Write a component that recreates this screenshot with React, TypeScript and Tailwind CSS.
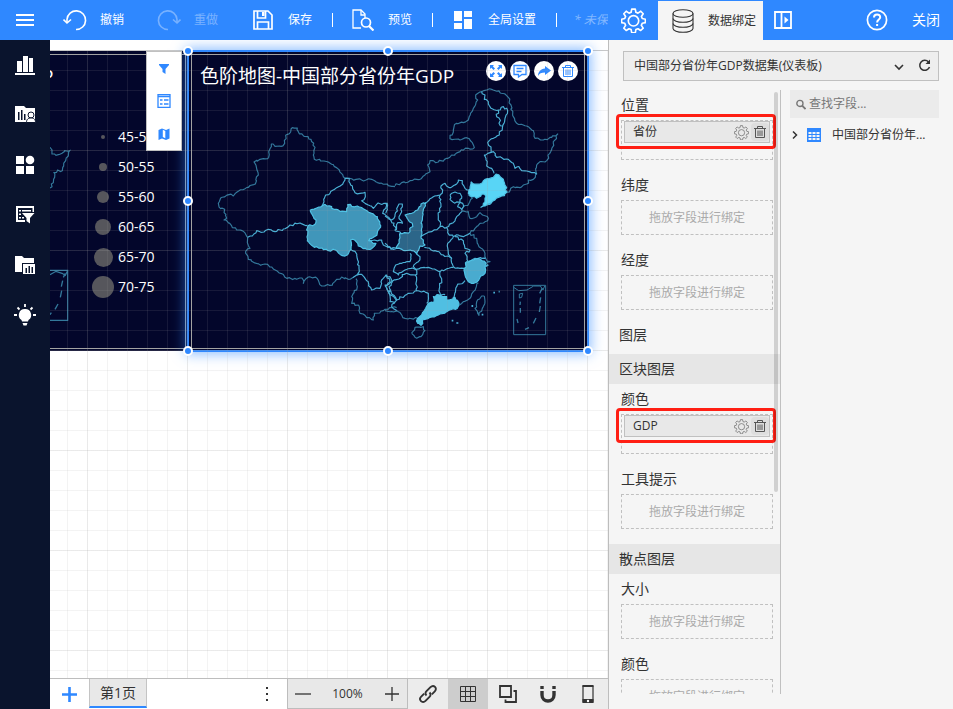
import type { ReactNode } from 'react';
import { clsx } from 'clsx';

const FONT = "font-['Open_Sans','Noto_Sans_CJK_SC',sans-serif]";

/* ---------- toolbar icons ---------- */

const UndoIcon = ({ flip = false }: { flip?: boolean }) => (
    <svg width="24" height="22" viewBox="0 0 24 22" fill="none" stroke="currentColor" strokeWidth="1.6" className={flip ? '-scale-x-100' : ''}>
        <path d="M4 13V10.500A9.300 9.300 0 1 1 13 20.500" />
        <path d="M0.500 10.500L4 14l4-3.500" />
    </svg>
);

const SaveIcon = () => (
    <svg width="20" height="20" viewBox="0 0 20 20" fill="none" stroke="currentColor" strokeWidth="1.7">
        <path d="M1 1h14l4 4v14H1z" />
        <path d="M4.500 1v7h8V1" />
        <path d="M9 2v4h2.500V2z" fill="currentColor" stroke="none" />
        <path d="M4.500 19v-7h11v7" />
    </svg>
);

const PreviewIcon = () => (
    <svg width="22" height="22" viewBox="0 0 22 22" fill="none" stroke="currentColor" strokeWidth="1.3">
        <path d="M9 19H1V1h8l4 4v4" />
        <path d="M9 1v5h4" />
        <circle cx="14" cy="13.500" r="4.500" strokeWidth="1.7" />
        <path d="M17 17l4.500 4.500" strokeWidth="2.200" />
    </svg>
);

const BlocksIcon = () => (
    <svg width="18" height="18" viewBox="0 0 18 18" fill="currentColor">
        <path d="M0 0h8v10H0zM10 0h8v6h-8zM0 12h8v6H0zM10 8h8v10h-8z" />
    </svg>
);

const GearIcon = ({ size, stroke = 1.6 }: { size: number; stroke?: number }) => (
    <svg width={size} height={size} viewBox="0 0 24 24" fill="none" stroke="currentColor" strokeWidth={stroke} strokeLinejoin="round">
        <path d="M10.300 1h3.400l.6 3.100 2 .8 2.700-1.800 2.300 2.400-1.700 2.600.8 2 3 .7v3.200l-3 .6-.9 2.100 1.800 2.600-2.400 2.300-2.600-1.700-2 .8-.6 3.100h-3.400l-.6-3.100-2-.8-2.700 1.700-2.300-2.300 1.700-2.600-.8-2.100L.6 14v-3.200l3-.7.8-2-1.700-2.600L5 3.100l2.700 1.800 2-.8z" />
        <circle cx="12" cy="12.300" r="5" />
    </svg>
);

const DatabaseIcon = () => (
    <svg width="22" height="24" viewBox="0 0 22 24" fill="none" stroke="currentColor" strokeWidth="1.1">
        <ellipse cx="11" cy="4.500" rx="10" ry="3.800" />
        <path d="M1 4.500v15c0 2 4.500 3.800 10 3.800s10-1.800 10-3.800v-15" />
        <path d="M1 9.500c0 2 4.500 3.800 10 3.800s10-1.800 10-3.800M1 14.500c0 2 4.500 3.800 10 3.800s10-1.800 10-3.800" />
    </svg>
);

const PanelIcon = () => (
    <svg width="18" height="18" viewBox="0 0 18 18" fill="none" stroke="currentColor" strokeWidth="1.800">
        <path d="M1 1h16v16H1zM7.500 1v16" />
        <path d="M10.500 5.500v7l4-3.500z" fill="currentColor" stroke="none" />
    </svg>
);

const TrashIcon = ({ size }: { size: number }) => (
    <svg width={size} height={size} viewBox="0 0 14 14" fill="none" stroke="currentColor" strokeWidth="1">
        <path d="M1 3.500h12M4.500 3.500v-2h5v2M2.500 3.500v9h9v-9M5 5.500v5.500M7 5.500v5.500M9 5.500v5.500" />
    </svg>
);

/* ---------- sidebar icons ---------- */

const sideItems: { label: string; icon: ReactNode }[] = [
    {
        label: '图表',
        icon: <path d="M2 6h5v11H2zM8 1h5v16H8zM14 3h4v14h-4zM0 18h20v2H0z" />,
    },
    {
        label: '我的图表',
        icon: (
            <>
                <path d="M0 1h9l2 2h9v14H0z" />
                <path d="M3 7h1.500v8H3zM6 5h1.500v10H6zM9 9h1.500v6H9z" fill="#0a142d" />
                <circle cx="16" cy="10" r="3" stroke="#0a142d" strokeWidth="1" />
                <path d="M11.500 17.500c0-3.500 2-4.500 4.500-4.500s4.500 1 4.500 4.500z" stroke="#0a142d" strokeWidth="1" />
            </>
        ),
    },
    {
        label: '组件',
        icon: (
            <>
                <path d="M1 1h8v8H1zM1 11h8v8H1zM11 11h8v8h-8z" />
                <circle cx="15" cy="5" r="4.300" />
            </>
        ),
    },
    {
        label: '筛选器',
        icon: (
            <>
                <path d="M1 1h18v6h-1.500V3H3v12h7v2H1z" />
                <path d="M4 5h2v1.500H4zM7 5h9v1.500H7zM4 8.500h2V10H4zM4 12h2v1.500H4zM7 12h2v1.500H7z" />
                <path d="M7 8h12.500L15 13v5.500L11.500 16v-3z" />
            </>
        ),
    },
    {
        label: '资源',
        icon: (
            <>
                <path d="M0 1h7l2 2h10v5H7v9H0z" />
                <path d="M8 9h12v10H8z" />
                <path d="M10.500 13H12v5h-1.500zM13.500 11H15v7h-1.500zM16.500 12H18v6h-1.500z" fill="#0a142d" />
            </>
        ),
    },
    {
        label: '智能推荐',
        icon: (
            <>
                <path d="M10 4a6 6 0 0 0-3.500 11l.5 1.500h6l.5-1.500A6 6 0 0 0 10 4zM7.500 18h5l-1 2.500h-3z" />
                <path d="M10-1v3M2.500 2.500l2 2M17.500 2.500l-2 2M-1 10h3M18 10h3" stroke="currentColor" strokeWidth="1.800" />
            </>
        ),
    },
];

/* ---------- map ---------- */

// The offset depends only on the position, so borders shared by two regions stay together.
function jitter(x: number, y: number) {
    const n = Math.sin(x * 12.9898 + y * 78.233) * 43758.5453;
    return (n - Math.floor(n) - 0.5) * 7;
}

// Splits every long segment of an absolute polyline path and shifts the new points a little.
function roughen(d: string) {
    return d.replace(/M[^MZ]+Z?/g, (part) => {
        const nums = part.match(/-?\d+/g)!.map(Number);
        const points: number[][] = [];
        for (let i = 0; i < nums.length; i += 2) points.push([nums[i], nums[i + 1]]);
        if (part.endsWith('Z')) points.push(points[0]);
        const out = [points[0]];
        for (let i = 1; i < points.length; i++) {
            const [ax, ay] = points[i - 1];
            const [bx, by] = points[i];
            const steps = Math.max(1, Math.round(Math.hypot(bx - ax, by - ay) / 7));
            for (let s = 1; s < steps; s++) {
                const x = ax + ((bx - ax) * s) / steps;
                const y = ay + ((by - ay) * s) / steps;
                out.push([x + jitter(x, y), y + jitter(y, x)]);
            }
            out.push([bx, by]);
        }
        return 'M' + out.map((p) => p.map((v) => v.toFixed(1)).join(' ')).join('L');
    });
}

const westLines = [
    'M495 415L478 390 460 374 432 363 403 358 400 345 405 322 393 298 370 287 355 275 352 264 337 263 332 276 317 286 314 310 303 319 274 312 266 335 263 356 240 358 222 366 228 376 235 405 226 432 195 446 166 460 160 468 150 463 122 474 115 490 122 506 134 508 140 535 132 540 154 556 170 570 190 574 203 592 202 608 210 625 197 634 205 658 242 676 255 672 290 692 320 715 350 718 366 714 370 730 378 716 385 711 412 716 425 738 448 736 465 724 485 711 505 718 520 712',
    'M508 415L545 420 575 418 600 430 625 437 645 440',
    'M528 716L532 740 515 770 515 790 535 795 540 820 560 833 580 840 583 820 610 812 635 803 650 803',
];

const westBorders = [
    'M203 592L217 588 230 572 252 576 265 568 285 575 310 567 330 555 360 549 382 556',
    'M495 415L488 433 470 443 450 460 437 465 432 485 426 497',
    'M495 415L508 415 512 435 525 458 540 460 555 457 556 470 545 482 565 495 580 505 590 493 612 490 622 490 617 505 608 520 622 530 632 540 650 570',
    'M512 628L525 634 533 660 537 685 534 705 520 712 545 703 560 722 575 750 600 745 605 720 620 705 630 725 615 735 625 755 630 785 645 788',
    'M566 602L583 600 605 600 610 615 640 628 652 624',
];

const eastLines = [
    'M30 437L50 428 75 422 105 418 120 405 135 395 128 375 135 362 160 366 185 355 200 345 225 335 250 325 268 323 262 308 245 293 225 300 195 296 205 270 215 250 235 248 250 240 265 205 278 180 272 165 290 155 320 148 345 158 365 167 378 195 385 230 395 250 425 258 445 272 450 295 475 300 500 292 518 282 505 310 497 335 485 362 465 365 455 375 455 402 445 418 430 420 425 432 405 443 385 440 375 452 365 456',
    'M250 465L262 475 252 490 235 500 230 515 250 515 255 535 275 530 285 518 310 535 308 542 285 550 270 565 255 580 275 595 282 620 300 640 302 655 315 665 303 672',
    'M298 768L300 785 292 805 282 826 270 805 275 785 290 768Z',
    'M80 880L90 862 115 860 120 872 108 890 90 892Z',
    'M280 728L265 755 255 775 235 785 218 798',
    'M0 812L40 815 60 835 98 835',
];

const eastBorders = [
    'M290 155L300 165 298 178 310 185 318 205 340 210 355 200 368 212 360 235 352 265 343 285 325 295 308 308 318 325 318 337 298 345 303 360 305 378 320 385 327 400',
    'M340 210L335 230 344 238 342 250 352 258',
    'M318 337L325 335 335 352 365 357 385 370 390 385 402 380 410 392 425 393 440 398 455 402',
    'M125 487L145 470 165 465 173 450 168 438 180 430 192 443 215 432 220 420 232 422 240 445 252 450',
    'M195 465L210 456 225 460 230 475 225 487 205 487 195 478ZM225 487L218 500 230 508 236 498 225 487',
    'M165 465L168 500 160 530 165 560 140 575 108 590',
    'M0 528L20 540 30 524 38 500 42 492 52 492 50 515 42 530 52 550 38 548 30 570 48 578',
    'M0 490L8 495 2 520M0 610L18 628 35 624',
    'M230 515L215 530 200 550 185 562 165 560M185 562L188 578 205 590 220 585 235 590 255 580',
    'M205 592L188 610 190 640 200 655 205 680 225 685 238 685',
    'M210 590L235 602 240 625 255 630 240 640 250 665',
    'M250 665L270 655 290 655 302 655',
    'M118 622L150 632 175 645 200 655',
    'M95 642L105 650 100 665 85 680 92 688 130 682 165 695 205 683',
    'M75 640L75 665 50 670 32 675 25 695 40 705 60 690 78 685 92 688',
    'M165 695L170 720 163 745 168 765 180 765',
    'M92 688L95 720 95 752 130 760 130 770 125 790',
    'M92 705L65 700 45 715 20 725 0 740M95 752L70 760 35 780 25 765 5 745',
    'M0 705L15 710 22 725 12 740 15 765 35 780 20 800 35 812',
    'M240 722L215 740 203 775',
];

const provinces = [
    {
        name: '陕西',
        fill: '#2c6689',
        d: 'M125 487L115 510 112 540 110 565 108 590 120 615 105 618 95 642 80 632 60 632 35 625 42 600 45 580 75 575 82 550 70 540 60 525 80 520 98 510 108 492Z',
    },
    {
        name: '辽宁',
        fill: '#58d5f6',
        d: 'M258 425L268 432 285 432 300 418 325 412 333 402 347 412 355 418 360 435 366 456 350 468 330 480 318 490 300 498 288 502 300 485 303 468 290 462 275 475 262 470 250 460 255 447Z',
    },
    {
        name: '浙江',
        fill: '#49abcf',
        d: 'M245 665L265 660 285 657 302 668 302 690 295 705 280 722 265 730 250 725 240 705 238 685Z',
    },
    {
        name: '广东',
        fill: '#50bfe2',
        d: 'M122 805L130 790 145 788 145 770 165 765 185 770 185 780 210 772 222 790 212 808 185 815 160 825 135 832 112 840 108 856 98 850 98 835 110 825Z',
    },
];

const QINGHAI =
    'M390 511L410 504 430 495 455 500 462 508 500 515 503 494 515 499 532 498 550 506 575 520 592 530 602 556 592 578 583 590 570 596 566 602 588 610 575 626 550 626 535 618 524 600 512 600 513 628 503 644 487 647 470 632 430 629 395 616 382 603 380 570 384 557 405 553 408 540 400 530Z';

const ChinaMap = () => (
    <svg viewBox="-591 33 1200 900" className="absolute inset-0 h-full w-full" fill="none" strokeWidth="3.500" strokeLinejoin="round">
        <g transform="translate(-615 0)">
            <g stroke="#33789b">{westLines.map((d) => <path key={d} d={roughen(d)} />)}</g>
            <g stroke="#4ab0d5">{westBorders.map((d) => <path key={d} d={roughen(d)} />)}</g>
            <path fill="#4096ba" stroke="#4fc3e6" d={roughen(QINGHAI)} />
        </g>
        <g stroke="#33789b">{eastLines.map((d) => <path key={d} d={roughen(d)} />)}</g>
        <g stroke="#4ab0d5">{eastBorders.map((d) => <path key={d} d={roughen(d)} />)}</g>
        {provinces.map((p) => (
            <path key={p.name} d={roughen(p.d)} fill={p.fill} stroke="#4fc3e6" />
        ))}
        <path d="M200 842h5M214 849h6M325 758h5M341 755h3M290 824h5M262 795v6M300 680l10-6M306 494l12-4" stroke="#4ab0d5" strokeWidth="5" />
        <g stroke="#33789b" strokeWidth="3">
            <path d="M386 736h96v148h-96z" />
            <path d="M386 742l15 10 25-2 20-12 20 0 8 12 5-12M403 762l10-2-3 12-7 2z" />
            <path d="M472 744l-8 16M467 772l-3 18M466 798l-3 18M453 834l-8 16M432 863l-12 5M399 849l-3-12M406 818l0-14M405 795l1-10" strokeWidth="4" />
        </g>
    </svg>
);

/* ---------- canvas ---------- */

const legend = [
    { label: '45-50', size: 'size-1' },
    { label: '50-55', size: 'size-2' },
    { label: '55-60', size: 'size-3' },
    { label: '60-65', size: 'size-4' },
    { label: '65-70', size: 'size-[19px]' },
    { label: '70-75', size: 'size-[22px]' },
];

const ScatterWidget = () => (
    <section className="absolute top-0 left-0 h-[300px] w-[138px] overflow-hidden bg-[#03062b] text-white">
        <div className="absolute inset-x-0 top-[3px] right-[2px] bottom-[2px] border-y border-r border-[#a3a3a3]" />
        <svg viewBox="150 33 414 900" className="absolute inset-0 h-full w-full" fill="none" stroke="#33789b" strokeWidth="3.500">
            <path d={roughen('M150 322L156 330 156 342 168 346 186 340 194 332 209 332 205 348 197 362 191 378 187 392 173 390 162 398 164 412 160 428 154 432 156 440 150 444')} />
            <path d="M150 691h53v150h-53M150 704l18-10 18 6 10 6 6-12" />
            <path d="M196 700l-6 12M188 722l-4 18M185 752l-4 20M174 792l-9 16M154 818l-4 6" strokeWidth="4" />
        </svg>
        <p className="-ml-2 pt-[11px] text-[19px] leading-7">P</p>
        <ul className="pt-[32px] pl-[42px] text-sm leading-[30px]">
            {legend.map((item) => (
                <li key={item.label} className="flex items-center gap-[4px]">
                    <span className="flex w-[22px] justify-center">
                        <i className={clsx('rounded-full bg-[#56565c]', item.size)} />
                    </span>
                    {item.label}
                </li>
            ))}
        </ul>
    </section>
);

const handles = [
    '-top-[5px] -left-[5px]',
    '-top-[5px] left-[195px]',
    '-top-[5px] -right-[5px]',
    'top-[145px] -right-[5px]',
    '-right-[5px] -bottom-[5px]',
    '-bottom-[5px] left-[195px]',
    '-bottom-[5px] -left-[5px]',
    'top-[145px] -left-[5px]',
];

const actions: { label: string; icon: ReactNode }[] = [
    {
        label: '最大化',
        icon: <path d="M1 5V1h4L3.800 2.300 6 4.500 4.500 6 2.300 3.800zM13 5V1H9l1.200 1.300L8 4.500 9.500 6l2.200-2.200zM1 9v4h4l-1.200-1.300L6 9.500 4.500 8l-2.200 2.200zM13 9v4H9l1.200-1.300L8 9.500 9.500 8l2.200 2.200z" fill="currentColor" />,
    },
    {
        label: '备注',
        icon: <path d="M1 1.500h12v9H9L5.500 13v-2.500H1zM3.500 4.500h7M3.500 7.500h5" stroke="currentColor" strokeWidth="1.300" />,
    },
    {
        label: '转发',
        icon: <path d="M8 2l6 4.500L8 11V8.500C4.500 8.500 2 9.500 1 12c0-4 2.500-7 7-7.500z" fill="currentColor" />,
    },
    { label: '删除', icon: <TrashIcon size={14} /> },
];

const MapWidget = () => (
    <section className="absolute top-0 left-[138px] h-[300px] w-[400px] bg-[#03062b] text-white outline-2 -outline-offset-1 outline-[#2f88ff] shadow-[0_0_12px_3px_rgba(47,136,255,0.55)]">
        <div className="absolute inset-x-[3px] top-[3px] bottom-[2px] border border-[#a3a3a3]" />
        <ChinaMap />
        <header className="relative flex items-start justify-between pt-[10px] pr-[10px] pl-[12px]">
            <h1 className="pt-px text-[19px] leading-7">色阶地图-中国部分省份年GDP</h1>
            <div className="flex gap-1 text-[#2f88ff]">
                {actions.map((a) => (
                    <button key={a.label} aria-label={a.label} className="flex size-5 items-center justify-center rounded-full bg-white">
                        <svg width="14" height="14" viewBox="0 0 14 14" fill="none">{a.icon}</svg>
                    </button>
                ))}
            </div>
        </header>
    </section>
);

const QuickMenu = () => (
    <div className="absolute top-0 left-[96px] flex w-9 flex-col border border-[#c0c0c0] bg-white text-[#2f88ff]">
        <button aria-label="筛选" className="flex h-[33px] items-center justify-center">
            <svg width="14" height="14" viewBox="0 0 14 14" fill="currentColor">
                <path d="M2 2h10v1L8.500 7v5L5.500 10V7L2 3z" />
            </svg>
        </button>
        <button aria-label="图例" className="flex h-[32px] items-center justify-center">
            <svg width="14" height="14" viewBox="0 0 14 14" fill="none" stroke="currentColor">
                <path d="M1 .5h12v13H1zM1 2.500h12" strokeWidth="1.300" />
                <path d="M3 6h2.500M7 6h4.500M3 10h2.500M7 10h4.500" strokeWidth="1.500" />
            </svg>
        </button>
        <button aria-label="地图" className="flex h-[33px] items-center justify-center">
            <svg width="14" height="14" viewBox="0 0 14 14">
                <path d="M1.500 3L5 1.500l4 1.500 3.500-1.500v10L9 13l-4-1.500L1.500 13z" fill="currentColor" />
                <path d="M5.800 2.800L8.300 4v7.200L5.800 10z" fill="#fff" />
            </svg>
        </button>
    </div>
);

const Canvas = () => (
    <div className="relative min-h-0 flex-1 overflow-hidden bg-white pt-2.5">
        <div className="relative h-full border-t border-[#c8c8c8]">
            <ScatterWidget />
            <MapWidget />
            <div className="pointer-events-none absolute inset-0 [background-image:linear-gradient(to_right,#a0a0a020_1px,transparent_1px),linear-gradient(#a0a0a020_1px,transparent_1px),linear-gradient(to_right,#a0a0a01c_1px,transparent_1px),linear-gradient(#a0a0a01c_1px,transparent_1px)] [background-position:37px_-1px] [background-size:20px_20px,20px_20px,100px_100px,100px_100px]" />
            <QuickMenu />
            <div className="pointer-events-none absolute top-0 left-[138px] h-[300px] w-[400px]">
                {handles.map((pos) => (
                    <i key={pos} className={clsx('absolute size-2.5 rounded-full border-2 border-white bg-[#2f88ff]', pos)} />
                ))}
            </div>
        </div>
    </div>
);

/* ---------- bottom bar ---------- */

const viewTools: { label: string; active?: boolean; icon: ReactNode }[] = [
    {
        label: '关联',
        icon: (
            <g strokeWidth="1.900">
                <path d="M8.500 11.500c-1.500-1.500-1.300-3 0-4.300l4-4c1.500-1.500 3.300-1.500 4.500-.3s1.200 3-.2 4.400l-3 3" />
                <path d="M11.500 8.500c1.500 1.500 1.300 3 0 4.300l-4 4c-1.500 1.500-3.300 1.500-4.500.3s-1.200-3 .2-4.400l3-3" />
            </g>
        ),
    },
    { label: '网格', active: true, icon: <path d="M2.500 2.500h15v15h-15zM7.500 2.500v15M12.500 2.500v15M2.500 7.500h15M2.500 12.500h15" strokeWidth="1" /> },
    { label: '层级', icon: <path d="M2 2h11v11H2zM15.500 7H18v11H7.500v-2.500" strokeWidth="1.800" /> },
    {
        label: '吸附',
        icon: (
            <g strokeWidth="3.400">
                <path d="M4 7v4c0 8 12 8 12 0V7" />
                <path d="M4 2v3M16 2v3" />
            </g>
        ),
    },
    {
        label: '移动端',
        icon: (
            <>
                <rect x="5" y="1.500" width="10" height="17" rx="1" strokeWidth="1.200" />
                <path d="M4.500 1h11v2h-11zM4.500 15h11v4h-11z" fill="currentColor" stroke="none" />
                <circle cx="10" cy="17" r="1.200" fill="#fff" stroke="none" />
            </>
        ),
    },
];

const BottomBar = () => (
    <footer className="flex h-[31px] border-t border-[#bdbdbd] bg-white text-[#333]">
        <button aria-label="新增页" className="flex w-[39px] items-center justify-center text-[#2f88ff]">
            <svg width="15" height="15" viewBox="0 0 15 15" stroke="currentColor" strokeWidth="2.600">
                <path d="M7.500 0v15M0 7.500h15" />
            </svg>
        </button>
        <button className="mb-px w-[58px] border-x border-b-2 border-x-[#c4c4c4] border-b-[#2f88ff] bg-[#e8e8e8] text-sm leading-6">第1页</button>
        <div className="flex flex-1 justify-end">
            <button aria-label="更多" className="flex w-10 flex-col items-center justify-center gap-1">
                <i className="size-[2px] bg-[#333]" />
                <i className="size-[2px] bg-[#333]" />
                <i className="size-[2px] bg-[#333]" />
            </button>
        </div>
        <div className="flex w-[121px] items-center justify-between border-x border-b border-[#bdbdbd] bg-[#e8e8e8] px-[7px]">
            <button aria-label="缩小">
                <svg width="16" height="16" viewBox="0 0 16 16" stroke="currentColor" strokeWidth="1.300"><path d="M0 8h16" /></svg>
            </button>
            <span className="text-xs">100%</span>
            <button aria-label="放大">
                <svg width="16" height="16" viewBox="0 0 16 16" stroke="currentColor" strokeWidth="1.300"><path d="M1 8h14M8 1v14" /></svg>
            </button>
        </div>
        {viewTools.map((t) => (
            <button key={t.label} aria-label={t.label} className={clsx('flex w-10 items-center justify-center', t.active ? 'bg-[#cdcdcd]' : 'bg-[#ececec]')}>
                <svg width="20" height="20" viewBox="0 0 20 20" fill="none" stroke="currentColor">{t.icon}</svg>
            </button>
        ))}
    </footer>
);

/* ---------- top bar ---------- */

const ToolButton = ({ icon, label, disabled }: { icon: ReactNode; label: string; disabled?: boolean }) => (
    <button disabled={disabled} className={clsx('flex shrink-0 items-center pr-5', disabled && 'opacity-35')}>
        <span className="flex w-[50px] justify-center">{icon}</span>
        {label}
    </button>
);

const Separator = () => <i className="mr-[5px] h-[14px] w-px shrink-0 self-center bg-white" />;

const TopBar = () => (
    <header className="flex h-10 bg-[#2f88ff] text-xs text-white">
        <div className="flex min-w-0 flex-1 overflow-hidden">
            <button aria-label="菜单" className="flex w-[50px] shrink-0 flex-col items-center justify-center gap-[3px]">
                <i className="h-0.5 w-[18px] bg-white" />
                <i className="h-0.5 w-[18px] bg-white" />
                <i className="h-0.5 w-[18px] bg-white" />
            </button>
            <ToolButton icon={<UndoIcon />} label="撤销" />
            <ToolButton icon={<UndoIcon flip />} label="重做" disabled />
            <ToolButton icon={<SaveIcon />} label="保存" />
            <Separator />
            <ToolButton icon={<PreviewIcon />} label="预览" />
            <Separator />
            <ToolButton icon={<BlocksIcon />} label="全局设置" />
            <Separator />
            <span className="shrink-0 self-center pl-3 italic opacity-40">* 未保</span>
        </div>
        <div className="flex w-[345px]">
            <button aria-label="设置" className="flex w-[50px] items-center justify-center">
                <GearIcon size={25} />
            </button>
            <button className="mt-px flex w-[105px] items-center bg-[#f5f5f5] text-[#333]">
                <span className="flex w-[50px] justify-center"><DatabaseIcon /></span>
                数据绑定
            </button>
            <button aria-label="折叠面板" className="flex w-10 items-center justify-center">
                <PanelIcon />
            </button>
            <button aria-label="帮助" className="ml-auto flex items-center">
                <svg width="22" height="22" viewBox="0 0 22 22" fill="none" stroke="currentColor" strokeWidth="1.700">
                    <circle cx="11" cy="11" r="9.600" />
                    <path d="M8 8.500c0-4 6.200-4 6.200-.3 0 2.300-3.100 2.300-3.100 5.300M11.100 15v2" strokeWidth="2" />
                </svg>
            </button>
            <button className="mr-[13px] ml-6 text-sm">关闭</button>
        </div>
    </header>
);

/* ---------- binding panel ---------- */

const DropZone = ({ field }: { field?: string }) =>
    field ? (
        <div className="relative mr-[7px] ml-3 h-10 border border-dashed border-[#c0c0c0] px-0.5">
            <div className="flex h-[22px] items-center border border-[#c0c0c0] bg-[#e8e8e8] pl-2 text-xs">
                <span className="flex-1">{field}</span>
                <button aria-label={`${field} 设置`} className="flex w-5 justify-center text-[#777]"><GearIcon size={15} stroke={1.3} /></button>
                <button aria-label={`${field} 删除`} className="flex h-[18px] w-[18px] items-center justify-center rounded-sm bg-[#dedede] text-[#555]"><TrashIcon size={14} /></button>
            </div>
            <div className="pointer-events-none absolute -top-[7px] -right-[4px] -left-[6px] h-[35px] rounded-[4px] border-3 border-[#ff1f14]" />
        </div>
    ) : (
        <div className="mr-[7px] ml-3 flex h-[35px] items-center justify-center border border-dashed border-[#c0c0c0] text-xs text-[#aaa]">
            拖放字段进行绑定
        </div>
    );

const Binding = ({ label, field }: { label: string; field?: string }) => (
    <div className="mb-2.5">
        <h3 className="pl-3 text-sm leading-[30px]">{label}</h3>
        <DropZone field={field} />
    </div>
);

const BindingPanel = () => (
    <aside className="flex w-[345px] flex-col border-l border-[#bdbdbd] bg-[#f5f5f5] pt-[11px] text-[#333]">
        <div className="relative mr-[14px] ml-[14px] h-[30px]">
            <select aria-label="数据集" className="h-full w-full appearance-none border border-[#c0c0c0] bg-[#eee] pl-2.5 text-xs">
                <option>中国部分省份年GDP数据集(仪表板)</option>
            </select>
            <svg className="pointer-events-none absolute top-[12px] right-[35px]" width="10" height="8" viewBox="0 0 10 8" fill="none" stroke="currentColor" strokeWidth="1.600">
                <path d="M1 2l4 4 4-4" />
            </svg>
            <button aria-label="刷新" className="absolute top-[8px] right-[8px]">
                <svg width="13" height="13" viewBox="0 0 13 13" fill="none" stroke="currentColor" strokeWidth="1.500">
                    <path d="M10.500 3A5 5 0 1 0 11.500 8" />
                    <path d="M12 .5v4.500H7.500z" fill="currentColor" stroke="none" />
                </svg>
            </button>
        </div>
        <div className="mt-[9px] mb-[15px] flex min-h-0 flex-1">
            <div className="relative w-[172px] overflow-hidden border-r border-[#c0c0c0]">
                <Binding label="位置" field="省份" />
                <Binding label="纬度" />
                <Binding label="经度" />
                <h2 className="mb-1 pl-2.5 text-sm leading-[30px]">图层</h2>
                <h2 className="bg-[#e6e6e6] pl-2.5 text-sm leading-[30px]">区块图层</h2>
                <Binding label="颜色" field="GDP" />
                <Binding label="工具提示" />
                <h2 className="mt-[15px] bg-[#e6e6e6] pl-2.5 text-sm leading-[30px]">散点图层</h2>
                <Binding label="大小" />
                <Binding label="颜色" />
                <i className="absolute top-[2px] right-[2px] h-[400px] w-1 rounded-full bg-black/15" />
            </div>
            <div className="mr-[14px] ml-[9px] min-w-0 flex-1">
                <label className="flex h-7 items-center gap-[3px] bg-[#ebebeb] pl-1.5">
                    <svg width="11" height="11" viewBox="0 0 11 11" fill="none" stroke="#777" strokeWidth="1.500">
                        <circle cx="4.300" cy="4.300" r="3.400" />
                        <path d="M7 7l3.500 3.500" strokeWidth="2" />
                    </svg>
                    <input aria-label="查找字段" placeholder="查找字段..." className="w-full min-w-0 bg-transparent text-xs placeholder:text-[#777]" />
                </label>
                <button className="mt-[7px] flex h-5 items-center pl-[2px] text-xs">
                    <svg width="6" height="10" viewBox="0 0 6 10" fill="none" stroke="currentColor" strokeWidth="1.500"><path d="M1 1.500L4.500 5 1 8.500" /></svg>
                    <svg className="mr-[11px] ml-[9px]" width="14" height="14" viewBox="0 0 14 14">
                        <path d="M0 0h14v14H0z" fill="#2f88ff" />
                        <path d="M1.500 4h3v2h-3zM5.500 4h3v2h-3zM9.500 4h3v2h-3zM1.500 7h3v2h-3zM5.500 7h3v2h-3zM9.500 7h3v2h-3zM1.500 10h3v2h-3zM5.500 10h3v2h-3zM9.500 10h3v2h-3z" fill="#f5f5f5" />
                    </svg>
                    中国部分省份年...
                </button>
            </div>
        </div>
    </aside>
);

export default function App() {
    return (
        <div className={clsx('flex h-screen flex-col overflow-hidden', FONT)}>
            <TopBar />
            <div className="flex min-h-0 flex-1">
                <nav className="flex w-[50px] flex-col bg-[#0a142d] text-white">
                    {sideItems.map((item) => (
                        <button key={item.label} aria-label={item.label} className="flex h-[50px] items-center justify-center">
                            <svg width="20" height="20" viewBox="0 0 20 20" fill="currentColor" overflow="visible">{item.icon}</svg>
                        </button>
                    ))}
                </nav>
                <main className="flex min-w-0 flex-1 flex-col">
                    <Canvas />
                    <BottomBar />
                </main>
                <BindingPanel />
            </div>
        </div>
    );
}
